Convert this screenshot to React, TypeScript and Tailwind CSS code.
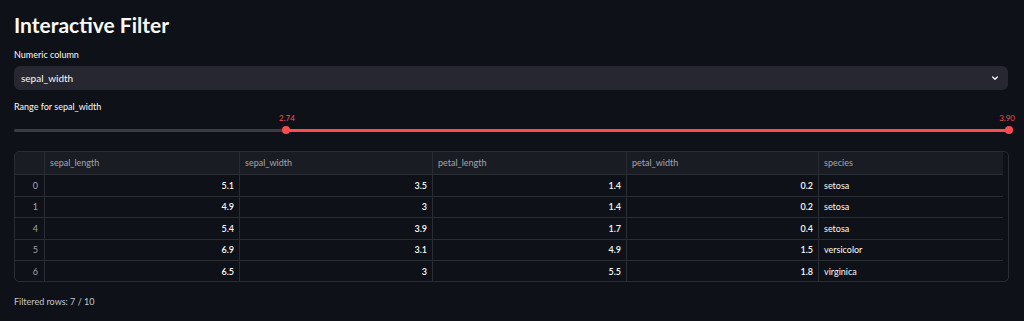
import React from "react";

const rows = [
  { i: 0, sl: "5.1", sw: "3.5", pl: "1.4", pw: "0.2", sp: "setosa" },
  { i: 1, sl: "4.9", sw: "3", pl: "1.4", pw: "0.2", sp: "setosa" },
  { i: 4, sl: "5.4", sw: "3.9", pl: "1.7", pw: "0.4", sp: "setosa" },
  { i: 5, sl: "6.9", sw: "3.1", pl: "4.9", pw: "1.5", sp: "versicolor" },
  { i: 6, sl: "6.5", sw: "3", pl: "5.5", pw: "1.8", sp: "virginica" },
];

const cols = ["sepal_length", "sepal_width", "petal_length", "petal_width", "species"];
const widths = ["w-[30px]", "w-[195px]", "w-[193px]", "w-[194px]", "w-[192px]", "w-[184px]"];

export default function App() {
  return (
    <div
      className="w-[1024px] h-[321px] bg-[#0e1117] text-[#fafafa] px-[14px] pt-[11px] overflow-hidden flex flex-col"
      style={{ fontFamily: 'Lato, "Noto Sans", sans-serif' }}
    >
      <h1 className="text-[21px] font-bold leading-[28px]">Interactive Filter</h1>
      <div className="mt-[10px] text-[9px] leading-[12px]">Numeric column</div>
      <div className="mt-[5px] h-[24px] w-[994px] rounded-[6px] bg-[#262730] flex items-center justify-between pl-[7px] pr-[9px]">
        <span className="text-[10px]">sepal_width</span>
        <svg width="8" height="8" viewBox="0 0 24 24" fill="none" stroke="#fafafa" strokeWidth="4" strokeLinecap="round" strokeLinejoin="round">
          <path d="M5 9l7 7 7-7" />
        </svg>
      </div>
      <div className="mt-[11px] text-[9px] leading-[12px]">Range for sepal_width</div>
      <div className="w-[999px] flex flex-col">
        <div className="flex h-[10px] items-end text-[8px] leading-[10px] text-[#ff4b4b]">
          <div className="w-[265px]" />
          <span>2.74</span>
          <div className="flex-1" />
          <span className="mr-[-2px]">3.90</span>
        </div>
        <div className="flex items-center h-[14px]">
          <div className="w-[269px] h-[3px] rounded-l-full bg-[#3b3d45]" />
          <div className="w-[8px] h-[8px] rounded-full bg-[#ff4b4b] -mx-[1px] z-10" />
          <div className="flex-1 h-[3px] bg-[#ff4b4b]" />
          <div className="w-[8px] h-[8px] rounded-full bg-[#ff4b4b] -ml-[1px]" />
        </div>
      </div>
      <div className="mt-[14px] w-[995px] h-[131px] rounded-[5px] border border-[#2a2c34] overflow-hidden text-[9px]">
        <div className="flex h-[23px] bg-[#1a1c24] w-[988px] border-b border-[#2a2c34]">
          <div className={`${widths[0]} border-r border-[#2a2c34]`} />
          {cols.map((c, idx) => (
            <div
              key={c}
              className={`${widths[idx + 1]} ${idx < 4 ? "border-r border-[#2a2c34]" : ""} flex items-center px-[5px] text-[#a3a6ad]`}
            >
              {c}
            </div>
          ))}
        </div>
        {rows.map((r, ri) => (
          <div key={r.i} className={`flex h-[21.5px] w-[988px] ${ri < 4 ? "border-b border-[#2a2c34]" : ""}`}>
            <div className={`${widths[0]} border-r border-[#2a2c34] flex items-center justify-end pr-[6px] text-[#a3a6ad]`}>{r.i}</div>
            {[r.sl, r.sw, r.pl, r.pw].map((v, k) => (
              <div key={k} className={`${widths[k + 1]} border-r border-[#2a2c34] flex items-center justify-end pr-[5px] font-semibold`}>
                {v}
              </div>
            ))}
            <div className={`${widths[5]} flex items-center px-[5px]`}>{r.sp}</div>
          </div>
        ))}
      </div>
      <div className="mt-[14px] text-[9px] leading-[12px] text-[#c5c7cc]">Filtered rows: 7 / 10</div>
    </div>
  );
}
